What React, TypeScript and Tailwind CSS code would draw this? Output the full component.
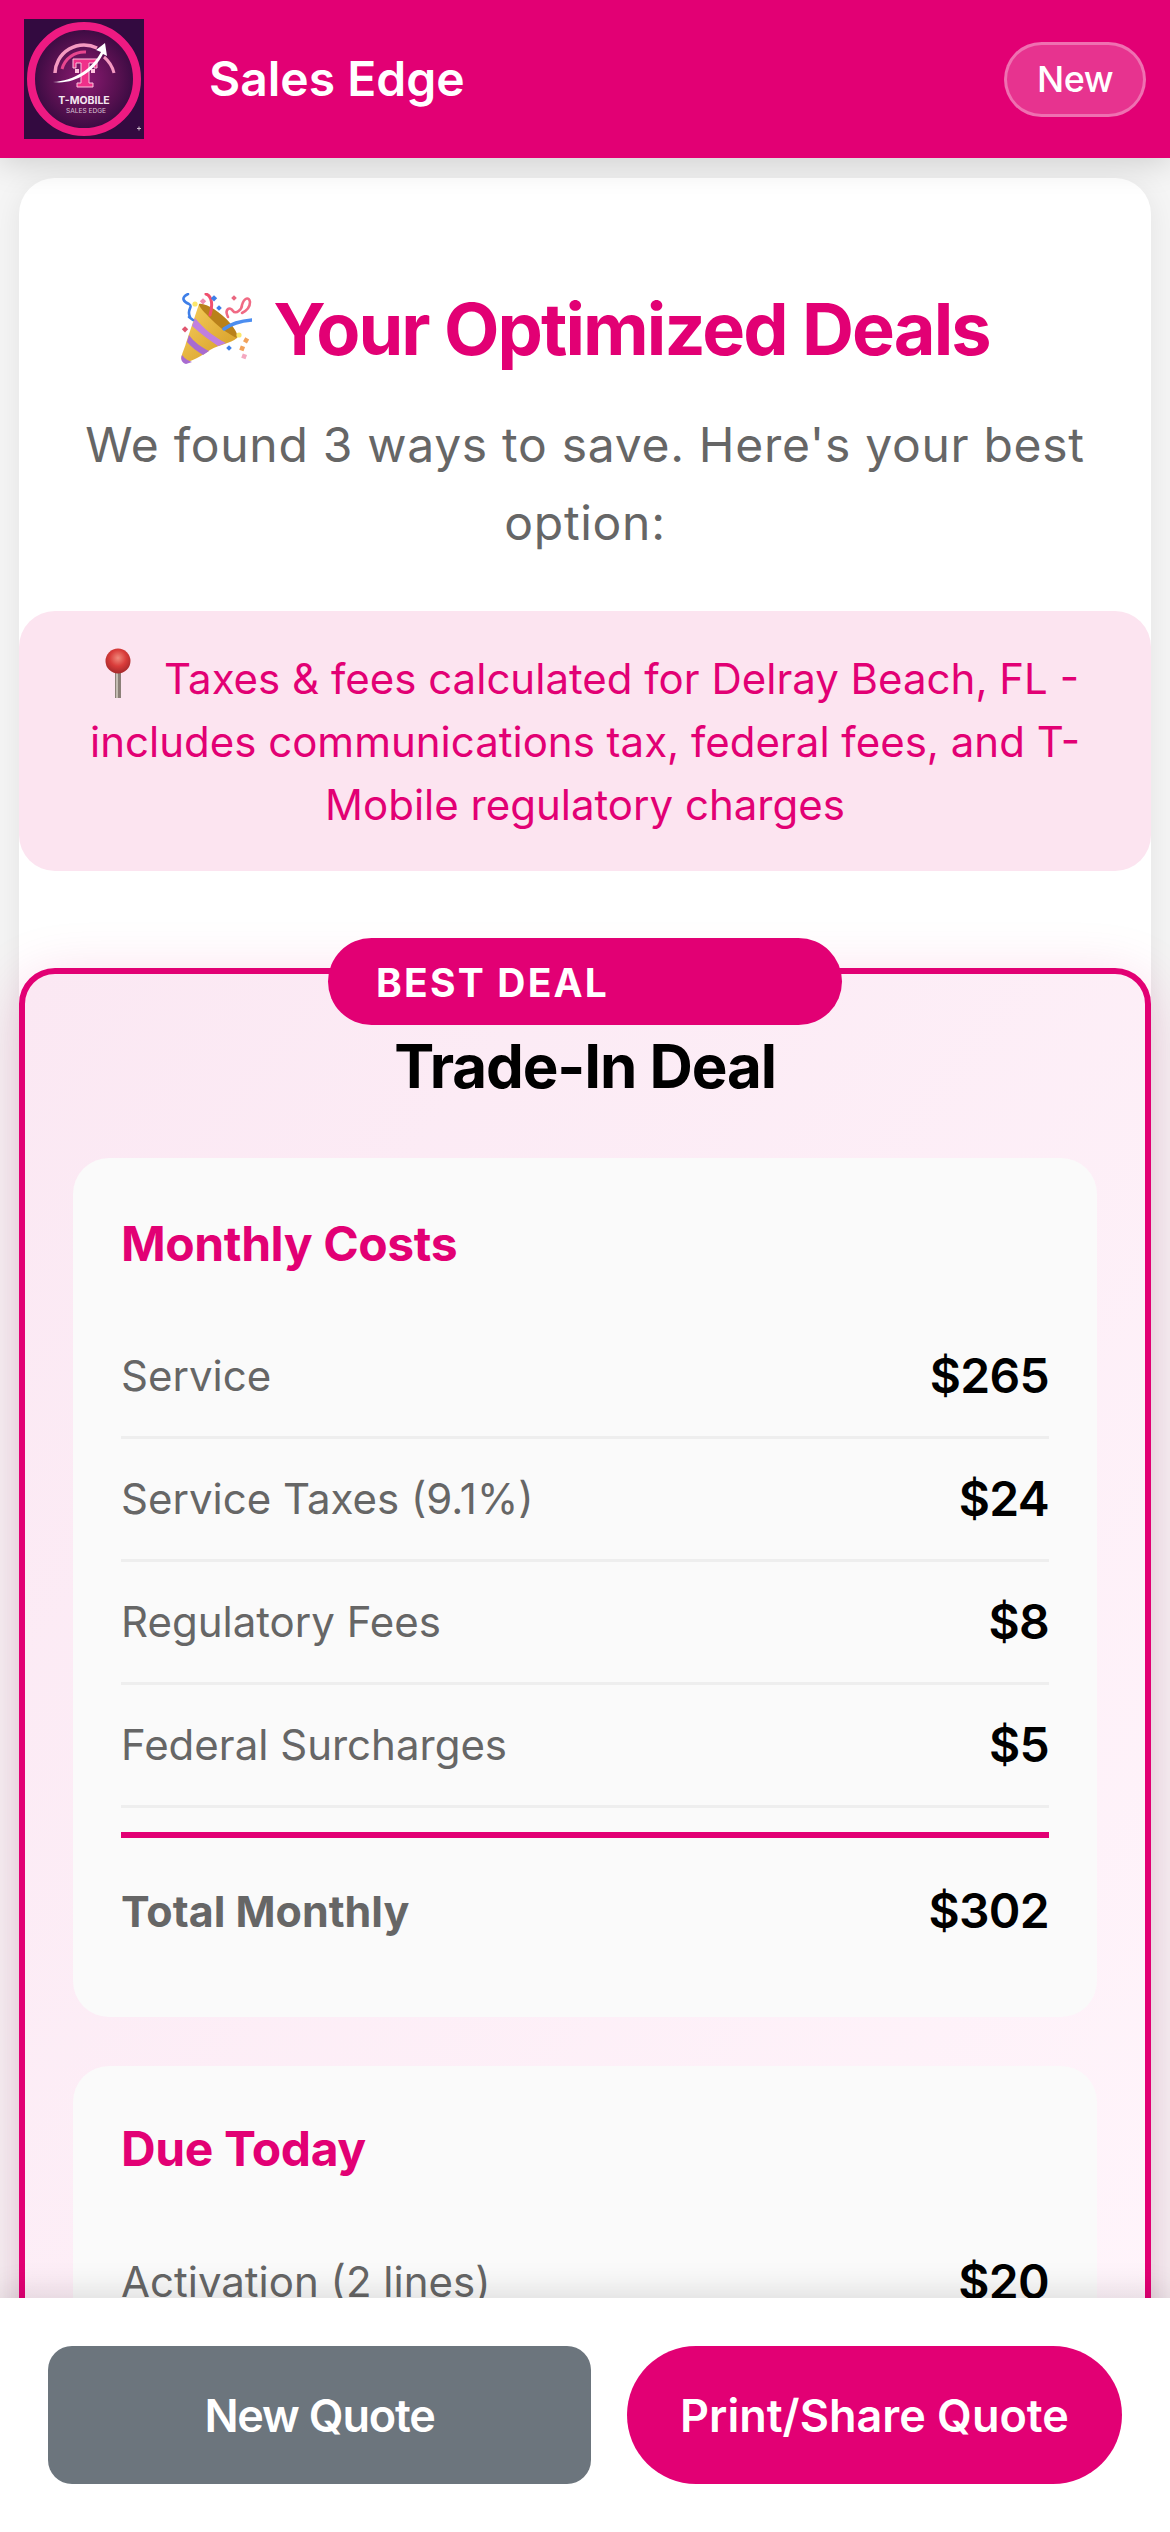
import React from "react";

function Logo() {
  return (
    <svg width="120" height="120" viewBox="0 0 120 120" className="shrink-0 block">
      <defs>
        <radialGradient id="lg" cx="50%" cy="50%" r="50%">
          <stop offset="0%" stopColor="#8c1a72" />
          <stop offset="70%" stopColor="#55104f" />
          <stop offset="100%" stopColor="#3a0b42" />
        </radialGradient>
      </defs>
      <rect width="120" height="120" fill="#330a40" />
      <circle cx="60" cy="60" r="51" fill="url(#lg)" />
      <circle cx="60" cy="60" r="53" fill="none" stroke="#ee1a82" strokeWidth="8" />
      <path d="M31 54 A29 29 0 0 1 73 29" fill="none" stroke="#f49ac1" strokeWidth="3.5" />
      <path d="M38 50 A23 23 0 0 1 62 33" fill="none" stroke="#e8468f" strokeWidth="3" />
      <path d="M80 38 A30 30 0 0 1 90 54" fill="none" stroke="#f49ac1" strokeWidth="3" />
      <g fill="#f0308a" stroke="#ffc4de" strokeWidth="1">
        <path d="M49 40 H73 V49 H70 V44 H65 V64 H69 V68 H53 V64 H57 V44 H52 V49 H49 Z" />
      </g>
      <rect x="67" y="50" width="4" height="4" fill="#ffc4de" />
      <rect x="51" y="50" width="4" height="4" fill="#ffc4de" />
      <path d="M29 63 C50 62 68 50 77 33 L72 31 L81 24 L83 37 L79 35 C70 53 50 66 29 63 Z" fill="#ffffff" />
      <text x="60" y="85" textAnchor="middle" fontFamily="Inter, sans-serif" fontWeight="700" fontSize="10.5" fill="#f4e8f0">T-MOBILE</text>
      <text x="62" y="94" textAnchor="middle" fontFamily="Inter, sans-serif" fontWeight="400" fontSize="6.6" fill="#d8c4d6">SALES EDGE</text>
      <path d="M113 109 h1.5 v-1.5 h1 v1.5 h1.5 v1 h-1.5 v1.5 h-1 v-1.5 h-1.5 z" fill="#cbb8c8" />
    </svg>
  );
}

function Popper() {
  return (
    <svg width="72" height="72" viewBox="0 0 72 72" className="inline-block align-[-10px] mr-[21px]">
      <defs>
        <linearGradient id="cone" x1="0" y1="0" x2="1" y2="1">
          <stop offset="0%" stopColor="#f7cf5e" />
          <stop offset="100%" stopColor="#d39a22" />
        </linearGradient>
      </defs>
      <path d="M19 11 L57 45 C50 51 40 51 30 57 C20 64 8 71 3 68 C-1 65 4 58 6 50 Z" fill="url(#cone)" />
      <path d="M19 11 C24 9 40 18 50 30 C56 37 59 44 57 45 C50 42 40 35 32 27 C25 20 18 13 19 11 Z" fill="#b9811a" />
      <path d="M15 25 C24 36 34 44 46 50 L38 53 C29 47 20 40 12 33 Z" fill="#c07fe0" />
      <path d="M9 42 C14 49 21 54 29 58 L23 62 C17 58 11 54 7 49 Z" fill="#a86bd0" />
      <path d="M2 62 C5 66 9 68 12 69 L6 71 C2 70 0 66 2 62 Z" fill="#a86bd0" />
      <path d="M44 36 C52 30 60 28 72 27" fill="none" stroke="#4c8ef0" strokeWidth="3.5" strokeLinecap="round" />
      <path d="M8 1 C0 5 4 9 9 11 C14 14 6 16 10 24 M9 24 L13 27" fill="none" stroke="#3f7fe8" strokeWidth="2.6" strokeLinecap="round" />
      <path d="M26 1 C32 3 33 12 30 22" fill="none" stroke="#f0506e" strokeWidth="3" strokeLinecap="round" />
      <path d="M48 24 C44 16 50 13 53 18 C56 22 62 16 62 12 C64 5 69 3 70 9 C70 15 66 18 62 20" fill="none" stroke="#f06a84" strokeWidth="2.6" strokeLinecap="round" />
      <circle cx="15" cy="11" r="2.6" fill="#fbe76a" />
      <circle cx="59" cy="42" r="2.6" fill="#fbe76a" />
      <rect x="21" y="6" width="4.5" height="4.5" fill="#f08bb0" transform="rotate(45 23 8)" />
      <rect x="32" y="3" width="4.5" height="4.5" fill="#3f7fe8" transform="rotate(45 34 5)" />
      <rect x="52" y="3" width="4" height="4" fill="#e9667f" transform="rotate(45 54 5)" />
      <rect x="37" y="13" width="4" height="4" fill="#3f7fe8" transform="rotate(45 39 15)" />
      <rect x="3" y="34" width="4.5" height="4.5" fill="#e0566f" transform="rotate(45 5 36)" />
      <rect x="47" y="53" width="4" height="4" fill="#3f7fe8" transform="rotate(45 49 55)" />
      <rect x="64" y="45" width="4.5" height="4.5" fill="#f2a25a" transform="rotate(30 66 47)" />
      <rect x="60" y="53" width="4.5" height="4.5" fill="#f2a25a" transform="rotate(20 62 55)" />
      <rect x="62" y="61" width="4.5" height="4.5" fill="#f4a8c0" transform="rotate(20 64 63)" />
    </svg>
  );
}

function Pin() {
  return (
    <svg width="42" height="50" viewBox="0 0 42 50" className="inline-block align-[-4px] ml-[6px] mr-[25px]">
      <defs>
        <radialGradient id="ball" cx="50%" cy="38%" r="60%">
          <stop offset="0%" stopColor="#f08a7c" />
          <stop offset="55%" stopColor="#d93c3a" />
          <stop offset="100%" stopColor="#a82a2c" />
        </radialGradient>
      </defs>
      <rect x="18" y="24" width="6" height="26" fill="#8b8078" />
      <rect x="19" y="24" width="2" height="26" fill="#c4bcb2" />
      <circle cx="21" cy="13" r="12.5" fill="url(#ball)" />
    </svg>
  );
}

function Row({ label, value }: { label: string; value: string }) {
  return (
    <div className="flex h-[123px] items-center justify-between border-b-[3px] border-[#eeeeee]">
      <span className="text-[42px] leading-none text-[#666666]">{label}</span>
      <span className="text-[48px] leading-none font-semibold tracking-[-0.7px] text-black">{value}</span>
    </div>
  );
}

export default function App() {
  return (
    <div className="flex h-[2532px] w-[1170px] flex-col overflow-hidden bg-[#f5f5f5] font-['Inter',sans-serif]">
      <header className="relative z-10 flex h-[158px] shrink-0 items-center bg-[#e20074] pr-[24px] pl-[24px] shadow-[0_6px_30px_rgba(0,0,0,0.15)]">
        <Logo />
        <h2 className="ml-[65px] flex-1 text-[48px] leading-none font-semibold text-white">Sales Edge</h2>
        <div className="flex h-[75px] w-[142px] items-center justify-center rounded-full border-[3px] border-white/30 bg-white/20 text-[36px] font-medium tracking-[-0.5px] text-white">
          New
        </div>
      </header>

      <main className="min-h-0 flex-1 overflow-hidden px-[19px] pt-[20px]">
        <div className="rounded-[36px] bg-white shadow-[0_6px_30px_rgba(0,0,0,0.08)]">
          <div className="px-[48px] pt-[106px] text-center">
            <h1 className="text-[72px] leading-[90px] font-bold tracking-[-1.9px] whitespace-nowrap text-[#e20074]">
              <Popper />
              Your Optimized Deals
            </h1>
            <p className="mt-[32px] text-[48px] leading-[78px] tracking-[0.7px] text-[#666666]">
              We found 3 ways to save. Here's your best option:
            </p>
          </div>

          <div className="mt-[49px] rounded-[36px] bg-[#fce4f0] px-[48px] pt-[36px] pb-[35px] text-center text-[42px] leading-[63px] text-[#e20074]">
            <Pin />
            Taxes &amp; fees calculated for Delray Beach, FL - includes communications tax, federal fees, and T-Mobile regulatory charges
          </div>

          <section className="relative mt-[97px] rounded-[36px] border-[6px] border-[#e20074] bg-linear-to-br from-[#fbe8f3] to-[#fff5fb] px-[48px] pt-[56px] pb-[48px] shadow-[0_12px_60px_rgba(226,0,116,0.18)]">
            <div className="absolute top-[-36px] left-[303px] flex h-[87px] w-[514px] items-center rounded-full bg-[#e20074] pt-[3px] pl-[48px] text-[39px] font-bold tracking-[2.2px] text-white">
              BEST DEAL
            </div>
            <h3 className="text-center text-[60px] leading-[72px] font-bold tracking-[-1.1px] text-black">Trade-In Deal</h3>

            <div className="mt-[56px] rounded-[36px] bg-[#fafafa] px-[48px] pt-[57px] pb-[33px]">
              <h4 className="mb-[43px] text-[48px] leading-[58px] font-bold tracking-[-0.4px] text-[#e20074]">Monthly Costs</h4>
              <Row label="Service" value="$265" />
              <Row label="Service Taxes (9.1%)" value="$24" />
              <Row label="Regulatory Fees" value="$8" />
              <Row label="Federal Surcharges" value="$5" />
              <div className="mt-[24px] flex h-[152px] items-center justify-between border-t-[6px] border-[#e20074]">
                <span className="text-[43px] font-bold text-[#666666]">Total Monthly</span>
                <span className="text-[48px] leading-none font-semibold tracking-[-0.7px] text-black">$302</span>
              </div>
            </div>

            <div className="mt-[49px] rounded-[36px] bg-[#fafafa] px-[48px] pt-[54px] pb-[48px]">
              <h4 className="mb-[44px] text-[48px] leading-[58px] font-bold tracking-[-0.4px] text-[#e20074]">Due Today</h4>
              <Row label="Activation (2 lines)" value="$20" />
            </div>
          </section>
        </div>
      </main>

      <footer className="relative z-10 flex h-[234px] shrink-0 items-start gap-[36px] bg-white pt-[48px] pr-[48px] pl-[48px] shadow-[0_-6px_30px_rgba(0,0,0,0.12)]">
        <button className="h-[138px] w-[543px] rounded-[24px] bg-[#6c757d] pt-[2px] text-[45px] font-semibold tracking-[-1.2px] text-white">New Quote</button>
        <button className="h-[138px] w-[495px] rounded-full bg-[#e20074] pt-[2px] text-[45px] font-semibold text-white">Print/Share Quote</button>
      </footer>
    </div>
  );
}
